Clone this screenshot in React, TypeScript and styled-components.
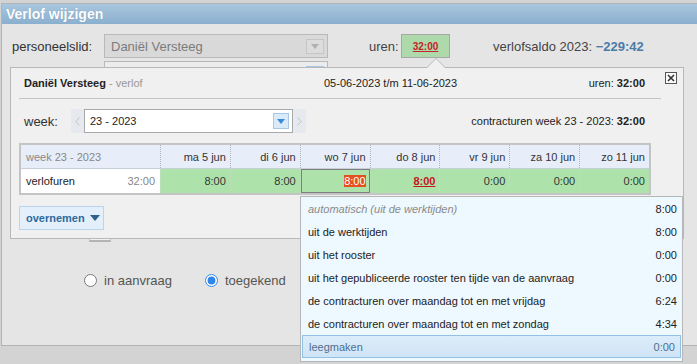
import React from "react"
import styled, { createGlobalStyle } from "styled-components"

const GlobalStyle = createGlobalStyle`
  html, body {
    margin: 0;
    padding: 0;
    height: 100%;
    background: #d3d3d3;
  }
  body {
    font-family: "Liberation Sans", Arial, sans-serif;
    color: #333;
  }
`

const Dialog = styled.div`
  margin: 3px 0 0 1px;
  border: 1px solid #b3b3b3;
  border-right: none;
  position: relative;
`
const TitleBar = styled.div`
  height: 20px;
  line-height: 20px;
  padding-left: 4px;
  background: linear-gradient(#a9c7de, #8aafce);
  color: #fff;
  font-weight: bold;
  font-size: 14px;
  text-shadow: 0 0 1px rgba(60, 90, 120, 0.4);
`
const Body = styled.div`
  position: relative;
  box-sizing: border-box;
  height: 321px;
  padding: 10px 0 0 10px;
  background: #e4e5e4;
  font-size: 13px;
`
const Row = styled.div`
  display: flex;
  align-items: center;
  height: 24px;
`
const FieldLabel = styled.span`
  width: 92px;
  color: #333;
`
const SelectBox = styled.div<{ $locked?: boolean }>`
  box-sizing: border-box;
  width: 224px;
  height: 24px;
  display: flex;
  align-items: center;
  justify-content: space-between;
  padding: 0 3px 0 6px;
  border: 1px solid #b9b9b9;
  background: ${(p) => (p.$locked ? "#d9d9d9" : "#ececec")};
  color: #7b7b7b;
`
const ArrowButton = styled.span<{ $blue?: boolean }>`
  box-sizing: border-box;
  width: 18px;
  height: 15px;
  display: flex;
  align-items: center;
  justify-content: center;
  border: 1px solid ${(p) => (p.$blue ? "#a7c7e7" : "#c6c6c6")};
  background: ${(p) => (p.$blue ? "#d9eaf9" : "#dcdcdc")};
`
const UrenLabel = styled.span`
  margin-left: 41px;
  width: 32px;
  color: #444;
`
const UrenBox = styled.span`
  box-sizing: border-box;
  width: 49px;
  height: 24px;
  display: flex;
  align-items: center;
  justify-content: center;
  background: #aed9aa;
  border: 1px solid #a8a8a8;
  color: #c4232b;
  font-size: 10px;
  font-weight: bold;
  text-decoration: underline;
`
const Saldo = styled.span`
  margin-left: 43px;
  color: #444;
  b {
    color: #4b7ca8;
  }
`
const SecondRow = styled(Row)`
  margin-top: 3px;
`
const CheckRow = styled.div`
  margin: 141px 0 0 77px;
  height: 16px;
`
const CheckBox = styled.span`
  display: block;
  box-sizing: border-box;
  width: 22px;
  height: 16px;
  border: 1px solid #c4c4c4;
  border-bottom: 2px solid #b4b4b4;
  background: #f2f2f2;
`
const RadioRow = styled.div`
  display: flex;
  align-items: center;
  gap: 33px;
  margin: 31px 0 0 72px;
  color: #555;
`
const RadioLabel = styled.label`
  display: flex;
  align-items: center;
  gap: 7px;
  input {
    margin: 0;
    width: 13px;
    height: 13px;
    accent-color: #2f86e8;
  }
`

const Popup = styled.div`
  position: absolute;
  left: 8px;
  top: 43px;
  box-sizing: border-box;
  width: 674px;
  height: 172px;
  padding: 0 22px 0 8px;
  background: #f0f0f0;
  border: 1px solid #b8b8b8;
  font-size: 11px;
  color: #222;
  z-index: 5;
  &::before,
  &::after {
    content: "";
    position: absolute;
    width: 0;
    height: 0;
    border-style: solid;
    border-color: transparent;
  }
  &::before {
    left: 415px;
    top: -10px;
    border-width: 0 10px 10px 10px;
    border-bottom-color: #b8b8b8;
  }
  &::after {
    left: 416px;
    top: -9px;
    border-width: 0 9px 9px 9px;
    border-bottom-color: #f0f0f0;
  }
`
const CloseButton = styled.span`
  position: absolute;
  top: 4px;
  right: 6px;
  box-sizing: border-box;
  width: 12px;
  height: 12px;
  border: 1px solid #555;
  background: #fafafa;
  display: flex;
  align-items: center;
  justify-content: center;
`
const PopupHeader = styled.div`
  height: 30px;
  display: grid;
  grid-template-columns: 300px 1fr auto;
  align-items: center;
  padding: 0 16px 0 5px;
  border-bottom: 1px solid #c4c4c4;
`
const Muted = styled.span`
  color: #999;
`
const WeekRow = styled.div`
  display: flex;
  align-items: center;
  height: 24px;
  margin-top: 10px;
  padding: 0 16px 0 5px;
`
const WeekLabel = styled.span`
  width: 47px;
  font-size: 13px;
  color: #333;
`
const NavButton = styled.span`
  width: 13px;
  height: 24px;
  display: flex;
  align-items: center;
  justify-content: center;
  background: #e6eaee;
`
const WeekSelect = styled.div`
  box-sizing: border-box;
  width: 209px;
  height: 24px;
  display: flex;
  align-items: center;
  justify-content: space-between;
  padding: 0 3px 0 5px;
  border: 1px solid #a9a9a9;
  background: #fff;
`
const DropButton = styled.span`
  box-sizing: border-box;
  width: 16px;
  height: 16px;
  display: flex;
  align-items: center;
  justify-content: center;
  background: #d9eaf9;
  border: 1px solid #a7c7e7;
`
const Contract = styled.span`
  margin-left: auto;
`
const Table = styled.div`
  margin-top: 10px;
  box-sizing: border-box;
  width: 632px;
  border: 2px solid #c4c4c4;
`
const TableRow = styled.div<{ $head?: boolean }>`
  display: grid;
  grid-template-columns: 139px repeat(7, 1fr);
  height: ${(p) => (p.$head ? "23px" : "24px")};
  background: ${(p) => (p.$head ? "#e8eef9" : "#ade3aa")};
  border-bottom: ${(p) => (p.$head ? "1px solid #c9cfd8" : "none")};
`
const Cell = styled.div<{ $head?: boolean; $selected?: boolean; $changed?: boolean }>`
  display: flex;
  align-items: center;
  justify-content: flex-end;
  padding: 0 4px;
  border-left: 1px dotted ${(p) => (p.$head ? "#b0b5bd" : "#c4dcc4")};
  color: ${(p) => (p.$changed ? "#c4161c" : "#333")};
  font-weight: ${(p) => (p.$changed ? "bold" : "normal")};
  text-decoration: ${(p) => (p.$changed ? "underline" : "none")};
  box-shadow: ${(p) => (p.$selected ? "inset 0 0 0 1px #7d7d7d" : "none")};
`
const FirstCell = styled.div<{ $head?: boolean }>`
  display: flex;
  align-items: center;
  justify-content: space-between;
  padding: 0 5px;
  background: ${(p) => (p.$head ? "transparent" : "#fff")};
  color: ${(p) => (p.$head ? "#888" : "#222")};
`
const Grey = styled.span`
  color: #888;
`
const Selection = styled.span`
  background: #e5501f;
  color: #fff;
`
const OvernemenButton = styled.div`
  margin-top: 11px;
  box-sizing: border-box;
  width: 85px;
  height: 24px;
  display: flex;
  align-items: center;
  gap: 5px;
  padding-left: 6px;
  background: #e3effa;
  border: 1px solid #b9d4ec;
  color: #2d6a9f;
  font-weight: bold;
`
const Menu = styled.div`
  position: absolute;
  left: 289px;
  top: 128px;
  box-sizing: border-box;
  width: 383px;
  padding-bottom: 3px;
  background: #eef8ff;
  border: 1px solid #b7b7b7;
  z-index: 2;
`
const MenuItem = styled.div<{ $auto?: boolean; $active?: boolean }>`
  box-sizing: border-box;
  height: 23px;
  display: flex;
  align-items: center;
  justify-content: space-between;
  padding: 0 5px 0 ${(p) => (p.$active ? "6px" : "7px")};
  margin: 0 ${(p) => (p.$active ? "1px" : "0")};
  color: ${(p) => (p.$active ? "#4f6f91" : "#222")};
  background: ${(p) => (p.$active ? "linear-gradient(#dcecf9, #cfe4f6)" : "transparent")};
  border: ${(p) => (p.$active ? "1px solid #93c1e6" : "none")};
  em {
    color: #8a8a8a;
  }
`

const Triangle = ({ color, w, h }: { color: string; w: number; h: number }) => (
  <svg width={w} height={h} viewBox="0 0 10 6">
    <path d="M0 0 L10 0 L5 6 Z" fill={color} />
  </svg>
)

const Chevron = ({ dir }: { dir: "left" | "right" }) => (
  <svg width="5" height="9" viewBox="0 0 5 9">
    <path
      d={dir === "left" ? "M4.5 0.5 L0.8 4.5 L4.5 8.5" : "M0.5 0.5 L4.2 4.5 L0.5 8.5"}
      stroke="#bcc6d0"
      strokeWidth="1"
      fill="none"
    />
  </svg>
)

const days = [
  { label: "ma 5 jun", value: "8:00" },
  { label: "di 6 jun", value: "8:00" },
  { label: "wo 7 jun", value: "8:00", selected: true },
  { label: "do 8 jun", value: "8:00", changed: true },
  { label: "vr 9 jun", value: "0:00" },
  { label: "za 10 jun", value: "0:00" },
  { label: "zo 11 jun", value: "0:00" },
]

const options = [
  { label: "automatisch (uit de werktijden)", value: "8:00", auto: true },
  { label: "uit de werktijden", value: "8:00" },
  { label: "uit het rooster", value: "0:00" },
  { label: "uit het gepubliceerde rooster ten tijde van de aanvraag", value: "0:00" },
  { label: "de contracturen over maandag tot en met vrijdag", value: "6:24" },
  { label: "de contracturen over maandag tot en met zondag", value: "4:34" },
  { label: "leegmaken", value: "0:00", active: true },
]

export default function App() {
  return (
    <>
      <GlobalStyle />
      <Dialog>
        <TitleBar>Verlof wijzigen</TitleBar>
        <Body>
          <Row>
            <FieldLabel>personeelslid:</FieldLabel>
            <SelectBox $locked>
              Daniël Versteeg
              <ArrowButton>
                <Triangle color="#b0b0b0" w={8} h={5} />
              </ArrowButton>
            </SelectBox>
            <UrenLabel>uren:</UrenLabel>
            <UrenBox>32:00</UrenBox>
            <Saldo>
              verlofsaldo 2023: <b>−229:42</b>
            </Saldo>
          </Row>
          <SecondRow>
            <FieldLabel />
            <SelectBox>
              <span />
              <ArrowButton $blue>
                <Triangle color="#3c8ad6" w={8} h={5} />
              </ArrowButton>
            </SelectBox>
          </SecondRow>
          <CheckRow>
            <CheckBox />
          </CheckRow>
          <RadioRow>
            <RadioLabel>
              <input type="radio" name="status" readOnly />
              in aanvraag
            </RadioLabel>
            <RadioLabel>
              <input type="radio" name="status" defaultChecked />
              toegekend
            </RadioLabel>
          </RadioRow>

          <Popup>
            <CloseButton>
              <svg width="8" height="8" viewBox="0 0 8 8">
                <path d="M1 1 L7 7 M7 1 L1 7" stroke="#333" strokeWidth="1.6" />
              </svg>
            </CloseButton>
            <PopupHeader>
              <span>
                <b>Daniël Versteeg</b> <Muted>- verlof</Muted>
              </span>
              <span>05-06-2023 t/m 11-06-2023</span>
              <span>
                uren: <b>32:00</b>
              </span>
            </PopupHeader>
            <WeekRow>
              <WeekLabel>week:</WeekLabel>
              <NavButton>
                <Chevron dir="left" />
              </NavButton>
              <WeekSelect>
                23 - 2023
                <DropButton>
                  <Triangle color="#3c8ad6" w={8} h={5} />
                </DropButton>
              </WeekSelect>
              <NavButton>
                <Chevron dir="right" />
              </NavButton>
              <Contract>
                contracturen week 23 - 2023: <b>32:00</b>
              </Contract>
            </WeekRow>
            <Table>
              <TableRow $head>
                <FirstCell $head>week 23 - 2023</FirstCell>
                {days.map((d) => (
                  <Cell $head key={d.label}>
                    {d.label}
                  </Cell>
                ))}
              </TableRow>
              <TableRow>
                <FirstCell>
                  verlofuren
                  <Grey>32:00</Grey>
                </FirstCell>
                {days.map((d) => (
                  <Cell key={d.label} $selected={d.selected} $changed={d.changed}>
                    {d.selected ? <Selection>{d.value}</Selection> : d.value}
                  </Cell>
                ))}
              </TableRow>
            </Table>
            <OvernemenButton>
              overnemen
              <Triangle color="#2d5f8f" w={10} h={8} />
            </OvernemenButton>
            <Menu>
              {options.map((o) => (
                <MenuItem key={o.label} $auto={o.auto} $active={o.active}>
                  {o.auto ? <em>{o.label}</em> : <span>{o.label}</span>}
                  <span>{o.value}</span>
                </MenuItem>
              ))}
            </Menu>
          </Popup>
        </Body>
      </Dialog>
    </>
  )
}
